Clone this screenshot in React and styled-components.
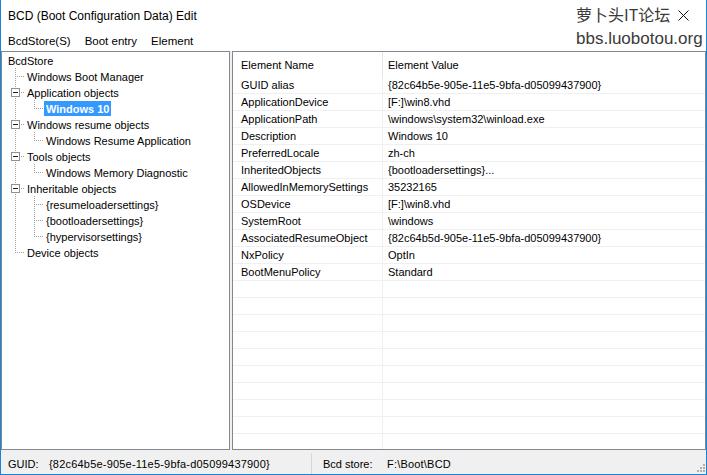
import React from "react";
import styled, { createGlobalStyle, css } from "styled-components";

const GlobalStyle = createGlobalStyle`
  html, body { margin: 0; padding: 0; background: #fff; }
  body {
    font-family: "Liberation Sans", Arial, sans-serif;
    font-size: 11px;
    color: #000;
  }
`;

const dotV = "repeating-linear-gradient(to bottom, #a0a0a0 0 1px, transparent 1px 2px)";
const dotH = "repeating-linear-gradient(to right, #a0a0a0 0 1px, transparent 1px 2px)";

const Window = styled.div`
  position: relative;
  width: 707px;
  height: 475px;
  box-sizing: border-box;
  border: 1px solid #1883d7;
  border-top: none;
  display: flex;
  flex-direction: column;
  overflow: hidden;
  background: #f0f0f0;
`;

const TitleBar = styled.div`
  height: 30px;
  flex: none;
  background: #fff;
  display: flex;
  align-items: center;
  justify-content: space-between;
  padding: 1px 17px 0 7px;
  box-sizing: border-box;
  font-size: 12px;
`;

const MenuBar = styled.div`
  height: 21px;
  flex: none;
  background: #fff;
  display: flex;
  align-items: center;
  padding-top: 1px;
  box-sizing: border-box;
  font-size: 11.5px;
`;

const MenuItem = styled.span`
  padding: 0 7px;
`;

const Watermark = styled.div`
  position: absolute;
  left: 575px;
  top: 4px;
  color: #3a3a3a;
  display: flex;
  flex-direction: column;
  gap: 4px;
  pointer-events: none;
`;

const MarkCn = styled.span`
  font-family: "Noto Sans CJK SC", sans-serif;
  font-size: 16px;
  line-height: 20px;
`;

const MarkUrl = styled.span`
  font-family: "Liberation Sans", Arial, sans-serif;
  font-size: 17px;
  line-height: 22px;
`;

const Body = styled.div`
  height: 399px;
  flex: none;
  display: flex;
  gap: 2px;
`;

const Panel = styled.div`
  box-sizing: border-box;
  background: #fff;
  border: 1px solid #828790;
  overflow: hidden;
  width: ${(p) => p.$w}px;
`;

const Tree = styled.div`
  padding-left: 4px;
`;

const TreeRow = styled.div`
  display: flex;
  height: 16px;
`;

const Guide = styled.span`
  flex: none;
  width: 19px;
  height: 16px;
  ${(p) =>
    p.$line &&
    css`
      background: ${dotV} no-repeat 9px 0 / 1px 16px;
    `}
`;

const Connector = styled.span`
  flex: none;
  width: 19px;
  height: 16px;
  display: flex;
  align-items: center;
  background:
    ${dotH} no-repeat 9px 8px / 10px 1px,
    ${dotV} no-repeat 9px 0 / 1px ${(p) => (p.$last ? "8px" : "16px")};
`;

const Expander = styled.span`
  box-sizing: border-box;
  width: 9px;
  height: 9px;
  margin-left: 5px;
  border: 1px solid #919191;
  background: #fff;
  display: flex;
  align-items: center;
  justify-content: center;
  &::after {
    content: "";
    width: 5px;
    height: 1px;
    background: #222;
  }
`;

const Label = styled.span`
  height: 15px;
  margin-top: 1px;
  padding: 0 2px;
  display: flex;
  align-items: center;
  white-space: nowrap;
  ${(p) =>
    p.$selected &&
    css`
      background: #3399ff;
      color: #fff;
      font-weight: bold;
    `}
`;

const List = styled.div`
  display: flex;
  flex-direction: column;
`;

const HeaderRow = styled.div`
  display: grid;
  grid-template-columns: 150px 1fr;
  height: 25px;
  align-items: stretch;
`;

const HeaderCell = styled.div`
  display: flex;
  align-items: center;
  padding-left: ${(p) => (p.$first ? 8 : 5)}px;
  border-right: ${(p) => (p.$first ? "1px solid #e5e5e5" : "none")};
`;

const Row = styled.div`
  display: grid;
  grid-template-columns: 150px 1fr;
  height: 17px;
  box-sizing: border-box;
  border-bottom: 1px solid #f0f0f0;
  flex: none;
`;

const Cell = styled.div`
  display: flex;
  align-items: center;
  white-space: nowrap;
  padding-left: ${(p) => (p.$first ? 8 : 5)}px;
  border-right: ${(p) => (p.$first ? "1px solid #f0f0f0" : "none")};
`;

const StatusBar = styled.div`
  height: 24px;
  flex: none;
  display: flex;
  align-items: stretch;
  background: #f0f0f0;
`;

const StatusPart = styled.div`
  display: flex;
  align-items: center;
  width: ${(p) => p.$w}px;
  padding-left: ${(p) => p.$pad}px;
  border-right: ${(p) => (p.$sep ? "1px solid #d7d7d7" : "none")};
  margin-top: 3px;
`;

const StatusLabel = styled.span`
  width: ${(p) => p.$w}px;
  flex: none;
`;

const StatusValue = styled.span`
  letter-spacing: 0.2px;
`;

const Grip = styled.svg`
  margin-left: auto;
  align-self: flex-end;
  margin-bottom: 1px;
`;

const tree = [
  { label: "BcdStore", guides: [], conn: null },
  { label: "Windows Boot Manager", guides: [], conn: "mid" },
  { label: "Application objects", guides: [], conn: "mid", box: true },
  { label: "Windows 10", guides: [true], conn: "last", selected: true },
  { label: "Windows resume objects", guides: [], conn: "mid", box: true },
  { label: "Windows Resume Application", guides: [true], conn: "last" },
  { label: "Tools objects", guides: [], conn: "mid", box: true },
  { label: "Windows Memory Diagnostic", guides: [true], conn: "last" },
  { label: "Inheritable objects", guides: [], conn: "mid", box: true },
  { label: "{resumeloadersettings}", guides: [true], conn: "mid" },
  { label: "{bootloadersettings}", guides: [true], conn: "mid" },
  { label: "{hypervisorsettings}", guides: [true], conn: "last" },
  { label: "Device objects", guides: [], conn: "last" },
];

const elements = [
  ["GUID alias", "{82c64b5e-905e-11e5-9bfa-d05099437900}"],
  ["ApplicationDevice", "[F:]\\win8.vhd"],
  ["ApplicationPath", "\\windows\\system32\\winload.exe"],
  ["Description", "Windows 10"],
  ["PreferredLocale", "zh-ch"],
  ["InheritedObjects", "{bootloadersettings}..."],
  ["AllowedInMemorySettings", "35232165"],
  ["OSDevice", "[F:]\\win8.vhd"],
  ["SystemRoot", "\\windows"],
  ["AssociatedResumeObject", "{82c64b5d-905e-11e5-9bfa-d05099437900}"],
  ["NxPolicy", "OptIn"],
  ["BootMenuPolicy", "Standard"],
];

const rows = [...elements, ...Array.from({ length: 12 }, () => ["", ""])];

export default function App() {
  return (
    <>
      <GlobalStyle />
      <Window>
        <TitleBar>
          <span>BCD (Boot Configuration Data) Edit</span>
          <svg width="11" height="11" viewBox="0 0 11 11">
            <path d="M0.5 0.5 L10.5 10.5 M10.5 0.5 L0.5 10.5" stroke="#111" strokeWidth="1" />
          </svg>
        </TitleBar>
        <MenuBar>
          <MenuItem>BcdStore(S)</MenuItem>
          <MenuItem>Boot entry</MenuItem>
          <MenuItem>Element</MenuItem>
        </MenuBar>
        <Body>
          <Panel $w={229}>
            <Tree>
              {tree.map((n, i) => (
                <TreeRow key={i}>
                  {n.guides.map((g, j) => (
                    <Guide key={j} $line={g} />
                  ))}
                  {n.conn && (
                    <Connector $last={n.conn === "last"}>{n.box && <Expander />}</Connector>
                  )}
                  <Label $selected={n.selected}>{n.label}</Label>
                </TreeRow>
              ))}
            </Tree>
          </Panel>
          <Panel $w={474}>
            <List>
              <HeaderRow>
                <HeaderCell $first>Element Name</HeaderCell>
                <HeaderCell>Element Value</HeaderCell>
              </HeaderRow>
              {rows.map(([k, v], i) => (
                <Row key={i}>
                  <Cell $first>{k}</Cell>
                  <Cell>{v}</Cell>
                </Row>
              ))}
            </List>
          </Panel>
        </Body>
        <StatusBar>
          <StatusPart $w={303} $pad={7} $sep>
            <StatusLabel $w={41}>GUID:</StatusLabel>
            <StatusValue>{"{82c64b5e-905e-11e5-9bfa-d05099437900}"}</StatusValue>
          </StatusPart>
          <StatusPart $w={300} $pad={11}>
            <StatusLabel $w={64}>Bcd store:</StatusLabel>
            <StatusValue>F:\Boot\BCD</StatusValue>
          </StatusPart>
          <Grip width="12" height="12" viewBox="0 0 12 12">
            {[
              [9, 9], [6, 9], [3, 9], [9, 6], [6, 6], [9, 3],
            ].map(([x, y], i) => (
              <rect key={i} x={x} y={y} width="2" height="2" fill="#b0b0b0" />
            ))}
          </Grip>
        </StatusBar>
        <Watermark>
          <MarkCn>萝卜头IT论坛</MarkCn>
          <MarkUrl>bbs.luobotou.org</MarkUrl>
        </Watermark>
      </Window>
    </>
  );
}
